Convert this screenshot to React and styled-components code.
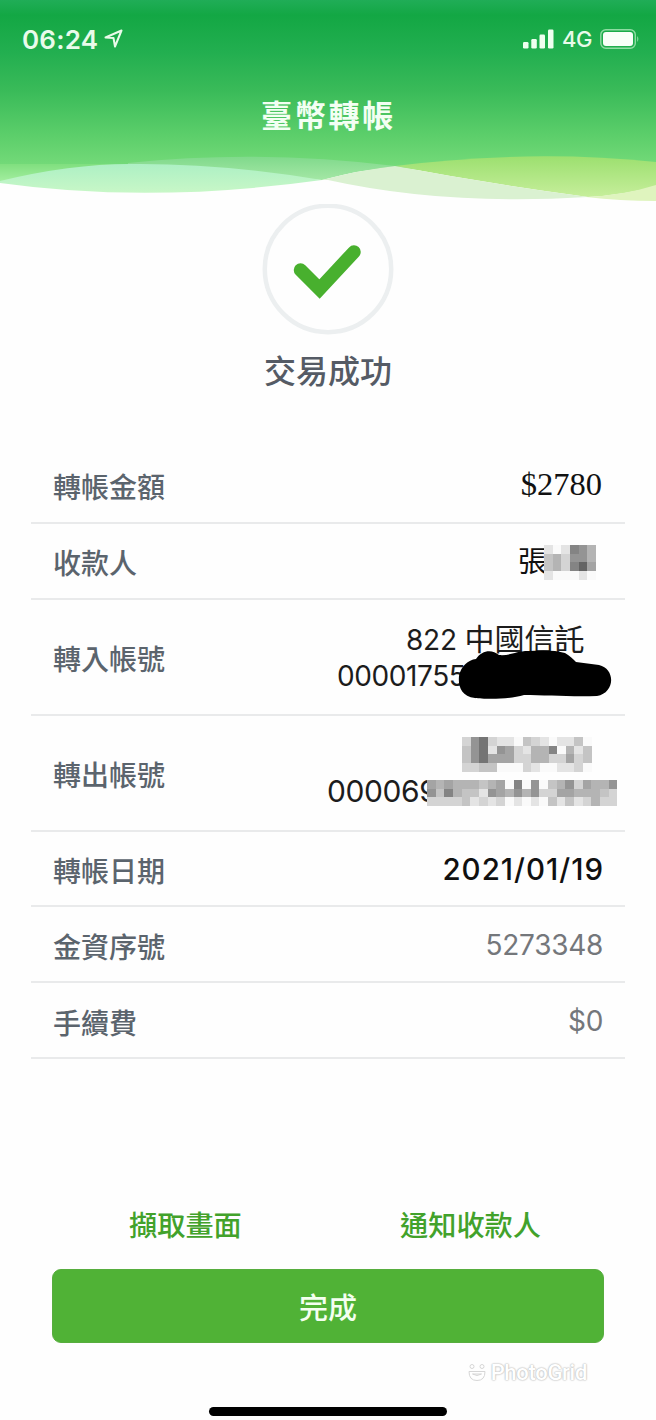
import React from 'react';
import styled, { createGlobalStyle } from 'styled-components';

const GlobalStyle = createGlobalStyle`
  * {
    box-sizing: border-box;
  }

  body {
    margin: 0;
    background: #fefefe;
    font-family: Inter, 'Noto Sans CJK TC', sans-serif;
  }
`;

const Screen = styled.div`
  width: 656px;
  height: 1420px;
  display: flex;
  flex-direction: column;
  background: #fefefe;
  overflow: hidden;
`;

const Header = styled.header`
  position: relative;
  height: 204px;
  flex: none;
`;

const Waves = styled.svg`
  position: absolute;
  inset: 0;
`;

const StatusBar = styled.div`
  position: relative;
  display: flex;
  align-items: center;
  justify-content: space-between;
  height: 78px;
  padding: 0 16px 0 22px;
  color: #e9fbea;
`;

const StatusGroup = styled.div`
  display: flex;
  align-items: center;
`;

const Time = styled.span`
  font-size: 26px;
  font-weight: 600;
  letter-spacing: 0.2px;
  margin-right: 6px;
`;

const Network = styled.span`
  font-size: 22px;
  font-weight: 500;
  letter-spacing: -0.5px;
  margin: 0 8px 0 8px;
`;

const Title = styled.h1`
  position: relative;
  margin: 14px 0 0;
  text-align: center;
  font-size: 31px;
  line-height: 48px;
  font-weight: 700;
  letter-spacing: 2.8px;
  text-indent: 1px;
  color: #f3fff3;
`;

const Result = styled.section`
  display: flex;
  flex-direction: column;
  align-items: center;
  height: 244px;
`;

const ResultText = styled.p`
  margin: 12px 0 0;
  font-size: 32px;
  line-height: 48px;
  font-weight: 500;
  color: #555b65;
`;

const Details = styled.section`
  margin: 0 31px;
`;

const Row = styled.div`
  display: flex;
  align-items: center;
  justify-content: space-between;
  height: ${props => (props.$tall ? 116 : 75.8)}px;
  padding: 2px 22px 0;
  border-bottom: 2px solid #e9eaeb;
`;

const Label = styled.span`
  padding-top: 5px;
  font-size: 28px;
  line-height: 40px;
  font-weight: 500;
  color: #5b646d;
`;

const Value = styled.span`
  position: relative;
  font-size: 28px;
  line-height: 36px;
  font-weight: ${props => props.$weight || 400};
  color: ${props => props.$color || '#74777b'};
  letter-spacing: -0.3px;
`;

const Amount = styled(Value)`
  font-family: 'Liberation Serif', serif;
  font-size: 32.5px;
  color: #111;
  letter-spacing: 0;
  padding: 0 1px 3px 0;
`;

const TransferDate = styled(Value)`
  font-size: 29.5px;
  letter-spacing: 1px;
  margin-right: -1px;
`;

const Payee = styled(Value)`
  width: 85px;
  font-size: 29px;
  color: #111;
`;

const Account = styled.div`
  position: relative;
  width: ${props => props.$width}px;
  height: 76px;
  display: flex;
  flex-direction: column;
  color: #1c1c1c;
`;

const Bank = styled.span`
  padding-left: 69px;
  font-size: 28px;
  line-height: 38px;
  font-weight: 400;
  letter-spacing: -0.2px;
  white-space: nowrap;
`;

const BankName = styled.span`
  font-size: 30px;
  letter-spacing: 0;
`;

const Digits = styled.span`
  font-size: ${props => props.$size}px;
  line-height: 34px;
  font-weight: 400;
  letter-spacing: -0.4px;
`;

const Cover = styled.svg`
  position: absolute;
  left: ${props => props.$left}px;
  top: ${props => props.$top}px;
  overflow: visible;
`;

const Links = styled.nav`
  display: flex;
  justify-content: space-between;
  margin: 145px 0 0;
  padding: 0 115px 0 129px;
`;

const TextButton = styled.button`
  border: 0;
  padding: 0;
  background: none;
  font-family: inherit;
  font-size: 28.2px;
  line-height: 44px;
  font-weight: 500;
  color: #42a22b;
`;

const DoneButton = styled.button`
  flex: none;
  height: 74px;
  margin: 21px 52px 0;
  border: 1px solid #57ad3e;
  border-radius: 9px;
  background: #50b236;
  color: #f4fff0;
  font-family: inherit;
  font-size: 29px;
  font-weight: 500;
`;

const Watermark = styled.div`
  display: flex;
  align-items: center;
  align-self: flex-end;
  gap: 5px;
  height: 30px;
  margin: 15px 69px 0 0;
  font-family: Roboto, sans-serif;
  font-size: 22px;
  font-weight: 500;
  letter-spacing: -0.3px;
  color: #fff;
  text-shadow: 0 0 1px #bbb, 0 0 2px #c4c4c4, 0 0 2px #d4d4d4;
`;

const HomeIndicator = styled.div`
  width: 238px;
  height: 9px;
  margin: 19px auto 0;
  border-radius: 5px;
  background: #000;
`;

const CELL = 8.65;

// one hex grey digit per cell
const PAYEE_CELLS = ['efe89b', 'cbd99b', 'cbd86a', 'efffef'];
const BANK_CELLS = ['d97deefcdefeecf', 'c97e9adebb8fbec', 'c97aaaddbbddadc', 'ddccfffdeffeedf'];
const ACCOUNT_CELLS = [
  'ababbbcbaf8f9fcb9dabb9',
  '9c8bcce9ab9b9ddaabbbcd',
  'ddddcededfefefcecedbdd',
];

const Mosaic = ({ cells, left, top }) => (
  <Cover
    $left={left}
    $top={top}
    width={cells[0].length * CELL}
    height={cells.length * CELL}
    shapeRendering="crispEdges"
  >
    {cells.map((line, y) =>
      line.split('').map((shade, x) => (
        <rect
          key={`${x}-${y}`}
          x={x * CELL}
          y={y * CELL}
          width={CELL}
          height={CELL}
          fill={shade === 'f' ? '#fafafa' : `#${shade}4${shade}4${shade}4`}
        />
      ))
    )}
  </Cover>
);

const App = () => {
  return (
    <>
      <GlobalStyle />
      <Screen>
        <Header>
          <Waves width="656" height="204" viewBox="0 0 656 204">
            <defs>
              <linearGradient id="sky" x1="0" y1="0" x2="0" y2="190" gradientUnits="userSpaceOnUse">
                <stop offset="0" stopColor="#20ad57" />
                <stop offset="0.08" stopColor="#13a744" />
                <stop offset="0.28" stopColor="#23af50" />
                <stop offset="0.48" stopColor="#3abb59" />
                <stop offset="0.72" stopColor="#5dcf6b" />
                <stop offset="0.86" stopColor="#72d978" />
                <stop offset="1" stopColor="#9ae69a" />
              </linearGradient>
              <linearGradient id="mint" x1="0" y1="164" x2="0" y2="193" gradientUnits="userSpaceOnUse">
                <stop offset="0" stopColor="#adf0c4" />
                <stop offset="1" stopColor="#c8f7c7" />
              </linearGradient>
              <linearGradient id="teal" x1="0" y1="156" x2="0" y2="180" gradientUnits="userSpaceOnUse">
                <stop offset="0" stopColor="#7fd98b" />
                <stop offset="1" stopColor="#a4e7a5" />
              </linearGradient>
              <linearGradient id="lime" x1="0" y1="157" x2="0" y2="197" gradientUnits="userSpaceOnUse">
                <stop offset="0" stopColor="#9de070" />
                <stop offset="1" stopColor="#c6ee9b" />
              </linearGradient>
              <linearGradient id="edge" x1="0" y1="163" x2="0" y2="183" gradientUnits="userSpaceOnUse">
                <stop offset="0" stopColor="#7ede7d" />
                <stop offset="1" stopColor="#a6efa2" />
              </linearGradient>
            </defs>
            <path d="M0 0H656V170L588 190L395 167L326 175L128 167L0 182Z" fill="url(#sky)" />
            <path d="M0 164H140V168L0 183Z" fill="url(#edge)" />
            <path d="M128 163Q260 149 395 166Q360 170 322 180L128 168Z" fill="url(#teal)" />
            <path d="M0 181Q70 164 130 164Q220 163 322 180Q150 204 0 183Z" fill="url(#mint)" />
            <path d="M395 166Q530 149 656 162V186Q625 195 588 197Q490 184 395 166Z" fill="url(#lime)" />
            <path d="M322 180Q360 170 395 166Q490 184 588 197Q445 206 328 180Z" fill="#daf1d1" />
            <path d="M586 197Q625 195 656 185V201Q620 201 586 197Z" fill="#dff4be" />
          </Waves>
          <StatusBar>
            <StatusGroup>
              <Time>06:24</Time>
              <svg width="20" height="20" viewBox="0 0 20 20" fill="none" stroke="#e9fbea" strokeWidth="2" strokeLinejoin="round">
                <path d="M1.5 8.5L17.5 1.5L11 17.5L9.5 9Z" />
              </svg>
            </StatusGroup>
            <StatusGroup>
              <svg width="31" height="20" viewBox="0 0 31 20" fill="#effff0">
                <rect x="0" y="13" width="5.5" height="6.5" rx="1.2" />
                <rect x="8.3" y="10" width="5.5" height="9.5" rx="1.2" />
                <rect x="16.5" y="5.5" width="5.5" height="14" rx="1.2" />
                <rect x="25" y="0.5" width="5.5" height="19" rx="1.2" />
              </svg>
              <Network>4G</Network>
              <svg width="40" height="20" viewBox="0 0 40 20">
                <rect x="0.8" y="0.8" width="34.5" height="18.4" rx="5" fill="none" stroke="#8edca2" strokeWidth="1.4" />
                <rect x="3" y="3" width="30" height="14" rx="3" fill="#f8fff8" />
                <path d="M37.2 7Q39.6 10 37.2 13Z" fill="#8edca2" />
              </svg>
            </StatusGroup>
          </StatusBar>
          <Title>臺幣轉帳</Title>
        </Header>

        <Result>
          <svg width="132" height="132" viewBox="0 0 132 132" fill="none">
            <circle cx="66" cy="65" r="63.2" stroke="#eceff0" strokeWidth="4.5" />
            <path d="M38.5 66L57.5 85L92 48" stroke="#48b02e" strokeWidth="13.5" strokeLinecap="round" />
          </svg>
          <ResultText>交易成功</ResultText>
        </Result>

        <Details>
          <Row>
            <Label>轉帳金額</Label>
            <Amount>$2780</Amount>
          </Row>
          <Row>
            <Label>收款人</Label>
            <Payee>
              張
              <Mosaic cells={PAYEE_CELLS} left={26} top={1} />
            </Payee>
          </Row>
          <Row $tall>
            <Label>轉入帳號</Label>
            <Account $width={266}>
              <Bank>
                822 <BankName>中國信託</BankName>
              </Bank>
              <Digits $size={28}>00001755</Digits>
              <Cover $left={121} $top={29} width="156" height="52" viewBox="0 0 156 52">
                <path
                  d="M1 27C3 17 10 11 18 10C24 1 34 0 41 6C52 7 58 2 70 2C84 1 98 1 107 4C112 7 115 10 118 13L141 16C158 20 157 44 139 47C114 48 87 46 66 46C50 51 25 50 17 49C3 47 0 37 1 27Z"
                  fill="#000"
                />
              </Cover>
            </Account>
          </Row>
          <Row $tall>
            <Label>轉出帳號</Label>
            <Account $width={276}>
              <Bank>&nbsp;</Bank>
              <Digits $size={30}>000069</Digits>
              <Mosaic cells={BANK_CELLS} left={134.6} top={1} />
              <Mosaic cells={ACCOUNT_CELLS} left={100} top={44} />
            </Account>
          </Row>
          <Row>
            <Label>轉帳日期</Label>
            <TransferDate $weight={500} $color="#101010">2021/01/19</TransferDate>
          </Row>
          <Row>
            <Label>金資序號</Label>
            <Value>5273348</Value>
          </Row>
          <Row>
            <Label>手續費</Label>
            <Value>$0</Value>
          </Row>
        </Details>

        <Links>
          <TextButton>擷取畫面</TextButton>
          <TextButton>通知收款人</TextButton>
        </Links>
        <DoneButton>完成</DoneButton>
        <Watermark>
          <svg width="18" height="19" viewBox="0 0 18 19" fill="#fff" stroke="#d6d6d6" strokeWidth="1">
            <circle cx="4" cy="3.5" r="2" />
            <circle cx="14" cy="3.5" r="2" />
            <path d="M1 8.5H17Q17 17.5 9 17.5Q1 17.5 1 8.5ZM4.5 11Q9 14 13.5 11Z" />
          </svg>
          PhotoGrid
        </Watermark>
        <HomeIndicator />
      </Screen>
    </>
  );
};

export default App;
